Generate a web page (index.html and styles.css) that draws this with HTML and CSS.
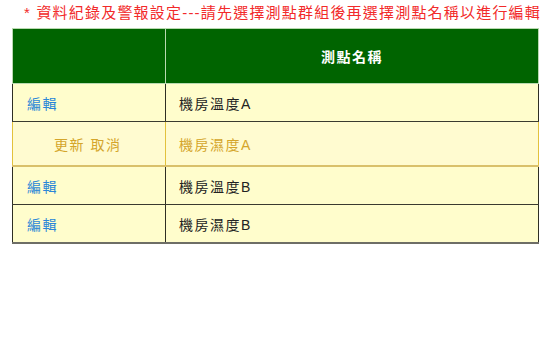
FILE: index.html
```html
<!DOCTYPE html>
<html lang="zh-Hant">
<head>
<meta charset="utf-8">
<link rel="stylesheet" href="styles.css">
</head>
<body>
<div class="page">
  <div class="title">* 資料紀錄及警報設定---請先選擇測點群組後再選擇測點名稱以進行編輯</div>
  <table class="grid">
    <tr class="head">
      <th class="c1"></th>
      <th class="c2">測點名稱</th>
    </tr>
    <tr class="row">
      <td class="c1"><a class="link">編輯</a></td>
      <td class="c2">機房溫度A</td>
    </tr>
    <tr class="row edit">
      <td class="c1"><span class="act">更新</span> <span class="act">取消</span></td>
      <td class="c2">機房濕度A</td>
    </tr>
    <tr class="row">
      <td class="c1"><a class="link">編輯</a></td>
      <td class="c2">機房溫度B</td>
    </tr>
    <tr class="row last">
      <td class="c1"><a class="link">編輯</a></td>
      <td class="c2">機房濕度B</td>
    </tr>
  </table>
</div>
</body>
</html>
```
FILE: styles.css
```css
html, body {
  margin: 0;
  padding: 0;
  background: #ffffff;
}
.page {
  font-family: "Liberation Sans", "Noto Sans CJK TC", sans-serif;
  width: 541px;
  height: 346px;
  overflow: hidden;
}
.title {
  color: #f22a2a;
  font-size: 15px;
  line-height: 20px;
  padding: 3px 0 0 24px;
  white-space: nowrap;
  overflow: hidden;
  height: 25px;
  box-sizing: border-box;
  letter-spacing: 1.2px;
}
.grid {
  margin: 3px 0 0 12px;
  border-collapse: collapse;
  width: 527px;
  table-layout: fixed;
}
.grid .c1 { width: 152px; }
.head th {
  background: #006400;
  color: #ffffff;
  font-size: 14px;
  font-weight: bold;
  height: 54px;
  border: 1px solid #b9d9b0;
  padding: 0;
  text-align: center;
  letter-spacing: 1.5px;
}
.row td {
  background: #fffdcc;
  color: #222222;
  font-size: 14px;
  letter-spacing: 1.5px;
  height: 37px;
  padding: 0 0 0 13px;
  border-left: 1px solid #2f2f24;
  border-right: 1px solid #2f2f24;
  border-bottom: 1px solid #3a3a30;
  text-align: left;
}
.row td.c1 { padding-left: 14px; }
.row .link {
  color: #2a86d8;
  text-decoration: none;
}
.row.edit td {
  background: #fffbd0;
  color: #d4a52a;
  height: 43px;
  border-left: 1px solid #e2c13c;
  border-right: 1px solid #e2c13c;
  border-bottom: 2px solid #d9c06a;
}
.row.edit td.c1 {
  padding-left: 41px;
}
.row.last td {
  border-bottom: 2px solid #6e6e66;
}
```
